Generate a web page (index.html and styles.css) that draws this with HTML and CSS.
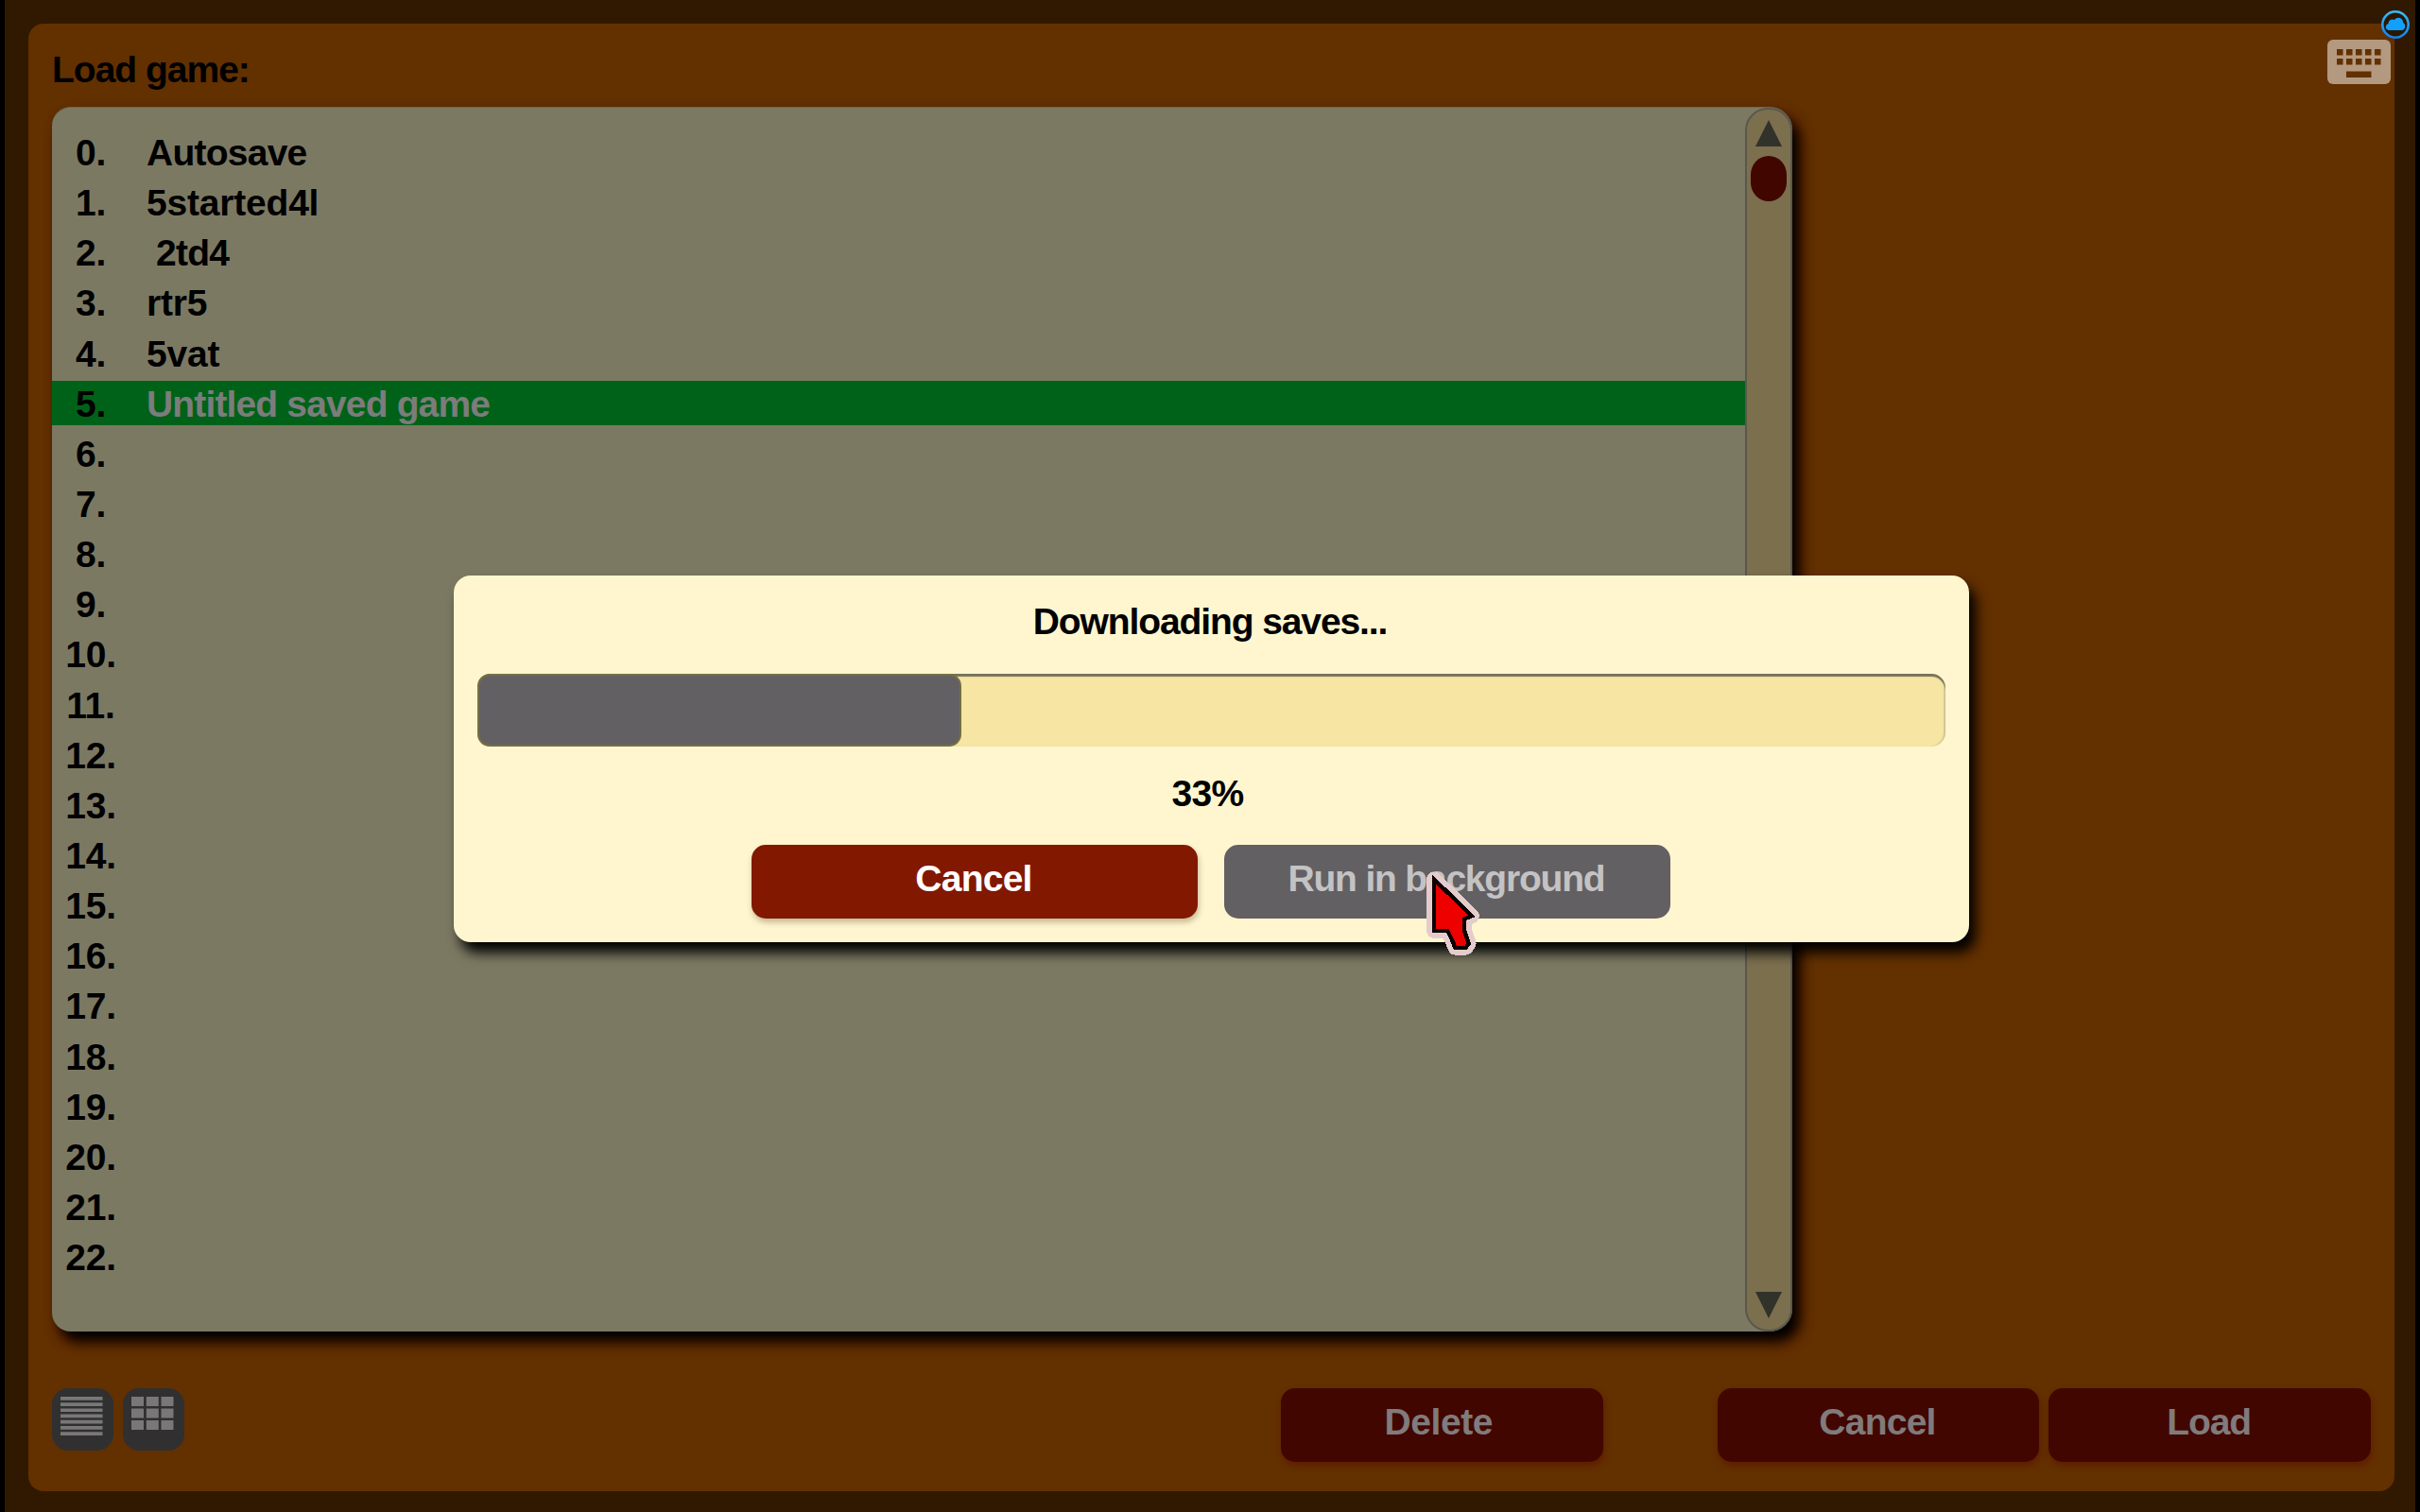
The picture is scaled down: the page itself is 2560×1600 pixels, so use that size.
FILE: index.html
```html
<!DOCTYPE html>
<html lang="en">
<head>
<meta charset="utf-8">
<title>Load game</title>
<link rel="stylesheet" href="styles.css">
</head>
<body>
<main class="panel">
  <h1 class="heading">Load game:</h1>
  <section class="list">
    <ol class="rows">
      <li class="row"><span class="num">0.</span><span class="name">Autosave</span></li>
      <li class="row"><span class="num">1.</span><span class="name wide">5started4l</span></li>
      <li class="row"><span class="num">2.</span><span class="name"> 2td4</span></li>
      <li class="row"><span class="num">3.</span><span class="name wide">rtr5</span></li>
      <li class="row"><span class="num">4.</span><span class="name wide">5vat</span></li>
      <li class="row selected"><span class="num">5.</span><span class="name long">Untitled saved game</span></li>
      <li class="row"><span class="num">6.</span></li>
      <li class="row"><span class="num">7.</span></li>
      <li class="row"><span class="num">8.</span></li>
      <li class="row"><span class="num">9.</span></li>
      <li class="row"><span class="num">10.</span></li>
      <li class="row"><span class="num">11.</span></li>
      <li class="row"><span class="num">12.</span></li>
      <li class="row"><span class="num">13.</span></li>
      <li class="row"><span class="num">14.</span></li>
      <li class="row"><span class="num">15.</span></li>
      <li class="row"><span class="num">16.</span></li>
      <li class="row"><span class="num">17.</span></li>
      <li class="row"><span class="num">18.</span></li>
      <li class="row"><span class="num">19.</span></li>
      <li class="row"><span class="num">20.</span></li>
      <li class="row"><span class="num">21.</span></li>
      <li class="row"><span class="num">22.</span></li>
    </ol>
    <div class="scrollbar">
      <svg class="arrow" viewBox="0 0 28 28"><path d="M14 0 28 28H0Z"/></svg>
      <div class="thumb"></div>
      <svg class="arrow down" viewBox="0 0 28 28"><path d="M0 0H28L14 28Z"/></svg>
    </div>
  </section>
  <footer class="footer">
    <button class="view"><svg viewBox="0 0 65 66"><path d="M9 9h44.500v3.700H9zm0 6.200h44.500v3.700H9zm0 6.200h44.500v3.700H9zm0 6.200h44.500v3.700H9zm0 6.200h44.500v3.700H9zm0 6.200h44.500v3.700H9zm0 6.200h44.500v3.700H9z"/></svg></button>
    <button class="view"><svg viewBox="0 0 65 66"><path d="M9 9h13v10H9zm15.800 0h13v10h-13zm15.700 0h13v10h-13zM9 21.600h13v10H9zm15.800 0h13v10h-13zm15.700 0h13v10h-13zM9 34.100h13v10H9zm15.800 0h13v10h-13zm15.700 0h13v10h-13z"/></svg></button>
    <button class="btn dim delete">Delete</button>
    <button class="btn dim cancel">Cancel</button>
    <button class="btn dim load">Load</button>
  </footer>
</main>

<svg class="keyboard" viewBox="0 0 67 47"><rect width="67" height="47" rx="6" fill="#b39980"/><path fill="#633000" d="M10 10h6.500v6.500H10zm10 0h6.500v6.500H20zm10 0h6.500v6.500H30zm10 0h6.500v6.500H40zm10 0h6.500v6.500H50zM10 20h6.500v6.500H10zm10 0h6.500v6.500H20zm10 0h6.500v6.500H30zm10 0h6.500v6.500H40zm10 0h6.500v6.500H50zM20 33.500h26.500v6.500H20z"/></svg>
<svg class="cloud" viewBox="0 0 30 30">
  <defs><linearGradient id="sky" gradientUnits="userSpaceOnUse" x1="0" y1="0" x2="0" y2="30"><stop offset="0" stop-color="#3cbdf0"/><stop offset="1" stop-color="#1280ee"/></linearGradient></defs>
  <circle cx="15" cy="15" r="13.700" fill="#2a1700" stroke="url(#sky)" stroke-width="2.600"/>
  <path fill="#12a0ff" d="M8 21C3.800 20.500 3.800 15 7.500 14c0-4 4-5.500 6.500-4 3-4 9-2 9.200 3 3 1.500 2.800 7-1.200 8z"/>
</svg>

<section class="dialog">
  <p class="title">Downloading saves...</p>
  <div class="track"><div class="fill" style="width:512px"></div></div>
  <p class="percent">33%</p>
  <div class="actions">
    <button class="btn stop">Cancel</button>
    <button class="btn background">Run in background</button>
  </div>
</section>

<svg class="cursor" viewBox="0 0 300 360" shape-rendering="crispEdges">
  <path d="M111 91V255H154L168 284 178 308H212L221 296 206 250V218L231 208Z" fill="#e4cccd" stroke="#e4cccd" stroke-width="47" stroke-linejoin="round"/>
  <path d="M111 91V255H154L168 284 178 308H212L221 296 206 250V218L231 208Z" fill="#ee0000" stroke="#0c0000" stroke-width="13"/>
</svg>
</body>
</html>
```
FILE: styles.css
```css
* { box-sizing: border-box; }

body {
  margin: 0;
  width: 2560px;
  height: 1600px;
  padding: 25px 22px 22px 25px;
  border: solid #000;
  border-width: 0 5px;
  background: #301900;
  overflow: hidden;
  font: bold 39px/53px "Liberation Sans", Arial, sans-serif;
  letter-spacing: -0.75px;
  color: #000;
  position: relative;
}

h1, p, ol { margin: 0; padding: 0; font: inherit; }
svg { display: block; }

.panel {
  width: 2503px;
  height: 1553px;
  padding: 22px 25px 30px;
  border-radius: 16px;
  background: #633000;
  display: flex;
  flex-direction: column;
}

.heading { height: 66px; letter-spacing: -1px; }

.list {
  display: flex;
  width: 1841px;
  height: 1296px;
  border-radius: 20px 24px 24px 20px;
  background: #7c7963;
  border-top: 1px solid #6a6658;
  box-shadow: 8px 11px 14px #000, 7px 9px 12px 3px rgba(102, 32, 0, .8);
}

.rows { flex: 1; padding-top: 21px; list-style: none; }
.row { height: 53.15px; display: flex; white-space: pre; }
.num { width: 82px; text-align: center; letter-spacing: -0.2px; }
.name { margin-left: 18px; }
.wide { letter-spacing: -0.2px; }
.long { letter-spacing: -0.85px; }
.selected {
  background: linear-gradient(#006218, #006218) 0 2px / 1791px 47px no-repeat;
}
.selected .name { color: #7c7c7c; }

.scrollbar {
  width: 50px;
  height: 1295px;
  border: 2px solid #5b574e;
  border-radius: 24px;
  background: #7b6f4e;
  padding: 11px 1px 12px 0;
  display: flex;
  flex-direction: column;
  align-items: center;
}
.arrow { width: 28px; height: 28px; fill: #31322a; }
.down { margin-top: auto; }
.thumb { width: 38px; height: 48px; margin-top: 10px; border-radius: 19px / 20px; background: #420600; }

.footer { display: flex; margin-top: 60px; height: 78px; }

button {
  border: 0;
  padding: 0;
  font: inherit;
  letter-spacing: inherit;
  color: #fff;
}
.view { width: 65px; height: 66px; border-radius: 17px; margin-right: 10px; background: #303030; }
.view svg { width: 65px; height: 66px; fill: #7a7779; }

.btn {
  height: 78px;
  padding: 0 2px 7px 0;
  border-radius: 15px;
  background: #821800;
  box-shadow: 1px 4px 6px rgba(60, 40, 0, .3);
}
.dim { width: 341px; background: #420600; color: #807b7c; box-shadow: 1px 4px 6px rgba(95, 20, 0, .7); }
.delete { margin-left: 1150px; padding-right: 7px; letter-spacing: -0.4px; }
.cancel { margin-left: 121px; }
.load { margin-left: 10px; letter-spacing: -1.1px; }

.keyboard { position: absolute; left: 2457px; top: 42px; width: 67px; height: 47px; }
.cloud { position: absolute; left: 2514px; top: 11px; width: 30px; height: 30px; }

.dialog {
  position: absolute;
  left: 475px;
  top: 609px;
  width: 1603px;
  height: 388px;
  padding: 22px 25px 0;
  border-radius: 18px;
  background: #fff6cf;
  box-shadow: 7px 11px 14px #000;
  text-align: center;
}
.title { height: 82px; padding-right: 3px; letter-spacing: -1.1px; }
.track {
  height: 77px;
  border-radius: 15px;
  background: #f6e5a3;
  box-shadow: inset 0 3px 1px #77725a, inset -2px 0 1px #d8ca94;
}
.fill { height: 77px; border: 2px solid #756f43; border-radius: 13px; background: #636063; }
.percent { height: 104px; padding: 23px 8px 0 0; }
.actions { display: flex; gap: 28px; padding-left: 290px; }
.actions .btn { width: 472px; }
.actions .background { background: #636063; color: #c3c3c3; box-shadow: none; letter-spacing: -1.2px; }

.cursor { position: absolute; left: 1475px; top: 900px; width: 100px; height: 120px; }
```
